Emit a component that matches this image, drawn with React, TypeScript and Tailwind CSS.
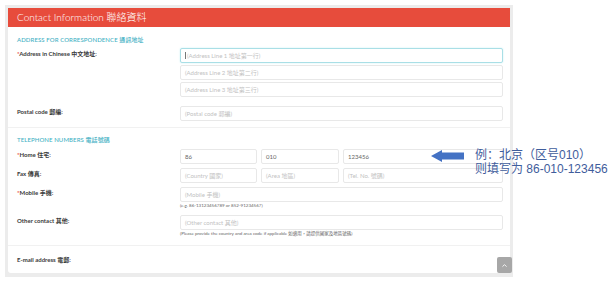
import { ChevronUp } from "lucide-react"

const latin = "font-['Lato','Noto_Sans_CJK_TC',sans-serif]"

function Field({ placeholder, value, focused }: { placeholder?: string; value?: string; focused?: boolean }) {
  return (
    <div
      className={`flex h-[15px] w-full items-center rounded-[2px] border bg-white px-[4px] text-[6px] ${
        focused ? "border-[#a9dfe6] shadow-[0_0_2px_#c8eef2]" : "border-[#e8e8e8]"
      }`}
    >
      {focused && <span className="mr-[1px] h-[7px] w-px bg-[#777]" />}
      {value ? <span className="text-[#666]">{value}</span> : <span className="text-[#c2c2c2]">{placeholder}</span>}
    </div>
  )
}

function Row({ label, required, children, className = "" }: { label: string; required?: boolean; children?: React.ReactNode; className?: string }) {
  return (
    <div className={`flex items-start ${className}`}>
      <div className="w-[163px] shrink-0 pt-[2px] text-[6px] font-bold leading-[7px] text-[#3a3a3a]">
        {required && <span className="text-[#e74c3c]">*</span>}
        {label}
      </div>
      <div className="flex flex-1 flex-col">{children}</div>
    </div>
  )
}

function SectionTitle({ children }: { children: React.ReactNode }) {
  return <div className="text-[6px] font-medium leading-[8px] tracking-[0.1px] text-[#3fb1c4]">{children}</div>
}

export default function App() {
  return (
    <div className={`relative h-[285px] w-[616px] overflow-hidden bg-white ${latin}`}>
      <div className="ml-[5px] mt-[5px] h-[272px] w-[508px] bg-[#ececec] p-[3px]">
        <div className="h-[265px] overflow-hidden rounded-b-[3px] bg-white">
          {/* Header */}
          <div className="flex h-[19px] items-center bg-[#e74c3c] px-[9px] text-[10px] font-light text-white">
            Contact Information 聯絡資料
          </div>

          <div className="pl-[9px] pr-[7px]">
            {/* Address */}
            <div className="pt-[9px]">
              <SectionTitle>ADDRESS FOR CORRESPONDENCE 通訊地址</SectionTitle>
            </div>
            <Row label="Address in Chinese 中文地址:" required className="mt-[4px]">
              <div className="flex flex-col gap-[2px]">
                <Field placeholder="(Address Line 1 地址第一行)" focused />
                <Field placeholder="(Address Line 2 地址第二行)" />
                <Field placeholder="(Address Line 3 地址第三行)" />
              </div>
            </Row>
            <Row label="Postal code 郵編:" className="mt-[9px]">
              <Field placeholder="(Postal code 郵編)" />
            </Row>
          </div>

          <div className="mt-[6px] border-t border-[#f1f1f1]" />

          <div className="pl-[9px] pr-[7px]">
            {/* Telephone */}
            <div className="pt-[8px]">
              <SectionTitle>TELEPHONE NUMBERS 電話號碼</SectionTitle>
            </div>
            <Row label="Home 住宅:" required className="mt-[5px]">
              <div className="flex gap-[4px]">
                <div className="w-[77px]"><Field value="86" /></div>
                <div className="w-[78px]"><Field value="010" /></div>
                <div className="flex-1"><Field value="123456" /></div>
              </div>
            </Row>
            <Row label="Fax 傳真:" className="mt-[4px]">
              <div className="flex gap-[4px]">
                <div className="w-[77px]"><Field placeholder="(Country 國家)" /></div>
                <div className="w-[78px]"><Field placeholder="(Area 地區)" /></div>
                <div className="flex-1"><Field placeholder="(Tel. No. 號碼)" /></div>
              </div>
            </Row>
            <Row label="Mobile 手機:" required className="mt-[4px]">
              <Field placeholder="(Mobile 手機)" />
              <div className="mt-[1px] text-[4.5px] leading-[6px] text-[#666]">(e.g. 86-13123456789 or 852-91234567)</div>
            </Row>
            <Row label="Other contact 其他:" className="mt-[6px]">
              <Field placeholder="(Other contact 其他)" />
              <div className="mt-[1px] text-[4.5px] leading-[6px] text-[#666]">
                (Please provide the country and area code if applicable 如適用，請提供國家及地區號碼)
              </div>
            </Row>
          </div>

          <div className="mt-[8px] border-t border-[#f1f1f1]" />

          <div className="pl-[9px] pr-[7px] pt-[8px]">
            <Row label="E-mail address 電郵:" />
          </div>
        </div>
      </div>

      {/* Scroll to top */}
      <div className="absolute left-[497px] top-[257px] flex h-[16px] w-[15px] items-center justify-center rounded-[2px] bg-[#a7a7a7]">
        <ChevronUp className="h-[7px] w-[7px] text-white" strokeWidth={3} />
      </div>

      {/* Annotation */}
      <svg className="absolute left-[431px] top-[150px]" width="33" height="12" viewBox="0 0 33 12">
        <polygon points="0,6 11,0 11,2.5 33,2.5 33,9.5 11,9.5 11,12" fill="#4472c4" />
      </svg>
      <div className="absolute left-[475px] top-[148px] font-['Liberation_Sans','Noto_Sans_CJK_SC',sans-serif] text-[12px] leading-[14px] text-[#3f5d9c]">
        <div>例：北京（区号010）</div>
        <div>则填写为 86-010-123456</div>
      </div>
    </div>
  )
}
